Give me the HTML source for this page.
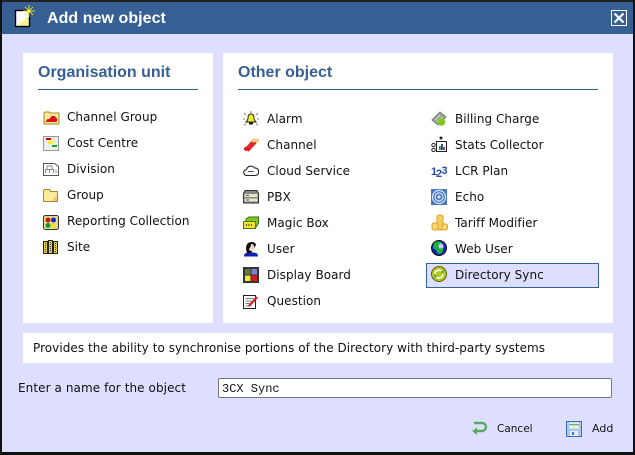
<!DOCTYPE html>
<html><head><meta charset="utf-8">
<style>
html,body{margin:0;padding:0}
body{width:635px;height:455px;position:relative;overflow:hidden;background:#dedfff;font-family:"DejaVu Sans","Liberation Sans",sans-serif;font-size:12px;color:#111;letter-spacing:.05px}
.a{position:absolute}
.t{position:absolute;white-space:nowrap;line-height:16px;height:16px}
.p{position:absolute;background:#fff}
.h{position:absolute;font:bold 16px/20px "Liberation Sans",sans-serif;color:#365f94;white-space:nowrap;letter-spacing:0}
.l{position:absolute;height:1px;background:#365f94}
svg{position:absolute;display:block}
</style></head><body>
<div class="a" style="left:0;top:0;width:635px;height:34px;background:#365f94"></div>
<div class="a" style="left:0;top:0;width:635px;height:2px;background:#222"></div>
<div class="a" style="left:0;top:0;width:2px;height:455px;background:#111"></div>
<div class="a" style="left:633px;top:0;width:2px;height:455px;background:#111"></div>
<div class="a" style="left:0;top:452px;width:635px;height:3px;background:#111"></div>

<svg style="left:14px;top:4px" width="24" height="24" viewBox="0 0 24 24"><rect x="1.500" y="6.500" width="14" height="16" fill="#fff" stroke="#000" stroke-width="1.400"/><path d="M3 21.500L14.500 21.500L14.500 12Z" fill="#fdf58c"/><path d="M11 3L19 11M19 3L11 11M15 1V13M9 7H21" stroke="#fff22a" stroke-width=".8"/><circle cx="15" cy="7" r="1.800" fill="#fff22a"/></svg>
<div class="t" style="left:47px;top:9px;font:bold 16px/20px 'Liberation Sans',sans-serif;color:#fff;height:20px;letter-spacing:.05px">Add new object</div>
<svg style="left:611px;top:10px" width="16" height="16" viewBox="0 0 16 16"><rect x=".5" y=".5" width="15" height="15" fill="none" stroke="#fff"/><path d="M3.500 3.500L12.500 12.500M12.500 3.500L3.500 12.500" stroke="#fff" stroke-width="2.200"/></svg>

<div class="p" style="left:23px;top:53px;width:190px;height:270px"></div>
<div class="p" style="left:223px;top:53px;width:390px;height:270px"></div>
<div class="p" style="left:23px;top:333px;width:590px;height:30px"></div>
<div class="h" style="left:38px;top:63px">Organisation unit</div>
<div class="l" style="left:38px;top:89px;width:160px"></div>
<div class="h" style="left:238px;top:63px">Other object</div>
<div class="l" style="left:238px;top:89px;width:360px"></div>

<!-- left icons -->
<svg style="left:43px;top:110px" width="17" height="15" viewBox="0 0 17 15"><path d="M1 3l1-1h4l1 1h9v11H1z" fill="#fbe89a" stroke="#a08a20"/><path d="M2.500 12l2-3 2 0 2-3 3 0 3 3-1 3z" fill="#d8141a"/></svg>
<svg style="left:43px;top:136px" width="16" height="15" viewBox="0 0 16 15"><rect x=".5" y=".5" width="15" height="14" fill="#eee" stroke="#999"/><rect x="3" y="2" width="5" height="2" fill="#b01010"/><rect x="5" y="5" width="5" height="3" fill="#ffee30"/><rect x="9" y="9" width="5" height="2" fill="#12a820"/></svg>
<svg style="left:43px;top:162px" width="16" height="15" viewBox="0 0 16 15"><path d="M.5 1.500h11l4 3v9H.500z" fill="#fff" stroke="#555"/><path d="M4 7V4h5v3M2.500 11V7.500h8V11M6.500 7.500V11M13 7.500V11" fill="none" stroke="#888"/></svg>
<svg style="left:43px;top:188px" width="16" height="15" viewBox="0 0 16 15"><path d="M.5 2.500l1-1h5l1 2h7v10H.500z" fill="#fdeca0" stroke="#a08a30"/><path d="M8 13l6-6v6z" fill="#f5c880"/></svg>
<svg style="left:43px;top:214px" width="16" height="16" viewBox="0 0 16 16"><rect x=".5" y="1.500" width="15" height="14" rx="2" fill="#e8d890" stroke="#333"/><circle cx="5" cy="6" r="2.500" fill="#d01010"/><circle cx="10.500" cy="6" r="2.500" fill="#1828c8"/><circle cx="5" cy="11.500" r="2.500" fill="#10a020"/><circle cx="10.500" cy="11.500" r="2.500" fill="#f0e020"/></svg>
<svg style="left:43px;top:240px" width="15" height="14" viewBox="0 0 15 14"><rect x=".5" y="1.500" width="4" height="12" fill="#e0d040" stroke="#222"/><rect x="5.500" y=".5" width="4" height="13" fill="#e0d040" stroke="#222"/><rect x="10.500" y="1.500" width="4" height="12" fill="#e0d040" stroke="#222"/><path d="M2.500 3v9M7.500 2v10M12.500 3v9" stroke="#444" stroke-dasharray="1 1"/></svg>

<div class="t" style="left:67px;top:109px">Channel Group</div>
<div class="t" style="left:67px;top:135px">Cost Centre</div>
<div class="t" style="left:67px;top:161px">Division</div>
<div class="t" style="left:67px;top:187px">Group</div>
<div class="t" style="left:67px;top:213px">Reporting Collection</div>
<div class="t" style="left:67px;top:239px">Site</div>

<!-- middle icons -->
<svg style="left:243px;top:111px" width="16" height="16" viewBox="0 0 16 16"><path d="M8 3c-2.500 0-3 2-3 4 0 2-1 3-2 4h10c-1-1-2-2-2-4 0-2-.500-4-3-4z" fill="#f4f020" stroke="#222"/><rect x="6" y="11.500" width="4" height="2" fill="#222"/><path d="M8 0v2M1 2l2 2M15 2l-2 2M0 8h2M14 8h2M1 14l2-1M15 14l-2-1" stroke="#888"/></svg>
<svg style="left:243px;top:137px" width="16" height="15" viewBox="0 0 16 15"><path d="M2 13.500L9.500 5M4.500 13.500L12.500 5" stroke="#e02828" stroke-width="3.200"/><path d="M1 12l2-2M4 13l2-1" stroke="#a01010"/><circle cx="10.500" cy="3.500" r="2" fill="#f6c880"/><circle cx="14" cy="3.500" r="2" fill="#f6c880"/></svg>
<svg style="left:243px;top:165px" width="16" height="11" viewBox="0 0 16 11"><path d="M4 10.500a3 3 0 0 1-.5-6 4.500 4.500 0 0 1 8-1.500 3.500 3.500 0 0 1 1 7.500z" fill="#fff" stroke="#222" stroke-width="1.100"/><rect x="5" y="6" width="6" height="1" fill="#4050a0"/></svg>
<svg style="left:243px;top:190px" width="16" height="14" viewBox="0 0 16 14"><path d="M2 .5h12l1.500 3v9.500H.5V3.500z" fill="#888" stroke="#333"/><rect x="1.500" y="4" width="13" height="3" fill="#e8e4c8"/><rect x="1.500" y="8.500" width="13" height="3" fill="#e8e4c8"/><path d="M3 5.500h3M3 10h3" stroke="#555"/></svg>
<svg style="left:243px;top:216px" width="16" height="14" viewBox="0 0 16 14"><path d="M3 3L6 1h9.500v6L13 11H3z" fill="#7cc820" stroke="#3a6a10"/><rect x=".5" y="5.500" width="12" height="7" fill="#f4e030" stroke="#4a7a10"/><path d="M3 9h1M5.500 9h1M8 9h1" stroke="#222" stroke-width="1.500"/></svg>
<svg style="left:243px;top:241px" width="16" height="16" viewBox="0 0 16 16"><path d="M1 15.500c0-3.500 2-4 7-4s7 .500 7 4z" fill="#1020b0"/><path d="M3 8c0-5 2-7 6-7 3 0 4 2 4 3l-5 8H4z" fill="#111"/><path d="M8 3c3 0 3.500 2 3 4s-1.500 3-3 3c-1 0-2-1-2-2 1-1 2-3 2-5z" fill="#f5d8b8"/></svg>
<svg style="left:243px;top:267px" width="16" height="16" viewBox="0 0 16 16"><rect width="16" height="16" fill="#333"/><rect x="2" y="2" width="5.500" height="5.500" fill="#6a7a3a"/><rect x="8.500" y="2" width="5.500" height="5.500" fill="#8080d8"/><rect x="2" y="8.500" width="5.500" height="5.500" fill="#f4e830"/><rect x="8.500" y="8.500" width="5.500" height="5.500" fill="#e01818"/></svg>
<svg style="left:243px;top:294px" width="16" height="15" viewBox="0 0 16 15"><path d="M.5 1.500h12v13H.5z" fill="#fff" stroke="#222"/><path d="M2.500 4.500h8M2.500 7h6M2.500 9.500h5M2.500 12h4" stroke="#777"/><path d="M6 12l8-9" stroke="#e01818" stroke-width="2.200"/></svg>

<div class="t" style="left:267px;top:111px">Alarm</div>
<div class="t" style="left:267px;top:137px">Channel</div>
<div class="t" style="left:267px;top:163px">Cloud Service</div>
<div class="t" style="left:267px;top:189px">PBX</div>
<div class="t" style="left:267px;top:215px">Magic Box</div>
<div class="t" style="left:267px;top:241px">User</div>
<div class="t" style="left:267px;top:267px">Display Board</div>
<div class="t" style="left:267px;top:293px">Question</div>

<!-- selected -->
<div class="a" style="left:426px;top:263px;width:171px;height:23px;background:#dedfff;border:1px solid #365f94"></div>

<!-- right icons -->
<svg style="left:431px;top:111px" width="16" height="16" viewBox="0 0 16 16"><path d="M1 9L9 1l6 5-8 8z" fill="#9aa88a" stroke="#778"/><path d="M4 9l5-5M6 11l5-5" stroke="#d8e0c8"/><circle cx="10.500" cy="11" r="3.800" fill="#80c820"/></svg>
<svg style="left:431px;top:136px" width="16" height="16" viewBox="0 0 16 16"><rect x="5.500" y="5.500" width="10" height="10" fill="#fff" stroke="#222"/><rect x="8" y="10" width="1.800" height="4" fill="#18a020"/><rect x="10" y="8" width="1.800" height="6" fill="#2030d0"/><rect x="12" y="11" width="1.800" height="3" fill="#d01818"/><circle cx="2.500" cy="9" r="1.700" fill="none" stroke="#222"/><circle cx="2.500" cy="14" r="1.700" fill="none" stroke="#222"/><circle cx="10" cy="2" r="1.500" fill="#222"/></svg>
<svg style="left:431px;top:162px" width="16" height="16" viewBox="0 0 16 16"><text x="0" y="13" font-family="Liberation Sans" font-size="11" font-weight="bold" fill="#2a4ab0">1</text><text x="5" y="15" font-family="Liberation Sans" font-size="11" font-weight="bold" fill="#2a4ab0">2</text><text x="10.500" y="12" font-family="Liberation Sans" font-size="11" font-weight="bold" fill="#2a4ab0">3</text></svg>
<svg style="left:431px;top:189px" width="16" height="16" viewBox="0 0 16 16"><rect width="16" height="16" fill="#4a78c0"/><circle cx="8" cy="8" r="6.500" fill="none" stroke="#d8e4f8" stroke-width="1.200"/><circle cx="8" cy="8" r="4" fill="none" stroke="#d8e4f8" stroke-width="1.200"/><circle cx="8" cy="8" r="1.600" fill="#d8e4f8"/></svg>
<svg style="left:431px;top:214px" width="17" height="17" viewBox="0 0 17 17"><rect x="6" y="1" width="6" height="15" rx="2" fill="#f4cf60" stroke="#d8a030"/><rect x="1" y="9" width="6" height="7" rx="2" fill="#f8d870" stroke="#d8a030"/><rect x="11" y="10" width="5.500" height="6" rx="2" fill="#f8d870" stroke="#d8a030"/></svg>
<svg style="left:431px;top:240px" width="16" height="16" viewBox="0 0 16 16"><circle cx="8" cy="8" r="7.500" fill="#1020b8" stroke="#111"/><path d="M3 3c2-2 5-2 7-1l3 5-2 6-4 1-2-4-3-2z" fill="#20b040"/><circle cx="10" cy="6" r="2.500" fill="#c8c8f0"/></svg>
<svg style="left:431px;top:266px" width="16" height="16" viewBox="0 0 16 16"><circle cx="8" cy="8" r="7.500" fill="#b8c828" stroke="#566010"/><path d="M4 8a4 4 0 0 1 7-2.500M12 8a4 4 0 0 1-7 2.500" fill="none" stroke="#fff" stroke-width="1.500"/><path d="M9.500 6.500h3v-3zM6.500 9.500h-3v3z" fill="#18a030"/></svg>

<div class="t" style="left:455px;top:111px">Billing Charge</div>
<div class="t" style="left:455px;top:137px">Stats Collector</div>
<div class="t" style="left:455px;top:163px">LCR Plan</div>
<div class="t" style="left:455px;top:189px">Echo</div>
<div class="t" style="left:455px;top:215px">Tariff Modifier</div>
<div class="t" style="left:455px;top:241px">Web User</div>
<div class="t" style="left:455px;top:267px">Directory Sync</div>

<div class="t" style="left:33px;top:340px">Provides the ability to synchronise portions of the Directory with third-party systems</div>
<div class="t" style="left:18px;top:380px;letter-spacing:.08px">Enter a name for the object</div>
<div class="a" style="left:218px;top:378px;width:392px;height:18px;background:#fff;border:1px solid #777;border-radius:2px"></div>
<div class="t" style="left:222px;top:381px;font:12px/16px 'Liberation Mono',monospace;letter-spacing:0">3CX Sync</div>

<svg style="left:471px;top:420px" width="16" height="16" viewBox="0 0 16 16"><path d="M3 3h8a3.500 3.500 0 0 1 0 8H4" fill="none" stroke="#5aa860" stroke-width="2.400"/><path d="M6 7.500L1 11l5 4z" fill="#5aa860"/></svg>
<div class="t" style="left:497px;top:421px;font-size:10.500px;letter-spacing:0">Cancel</div>
<svg style="left:566px;top:421px" width="16" height="16" viewBox="0 0 16 16"><rect x=".5" y=".5" width="15" height="15" fill="#a8c8f0" stroke="#3a70b8"/><rect x="3" y="1.500" width="10" height="6" fill="#e8f0e8"/><rect x="3" y="3" width="10" height="1.300" fill="#70b060"/><rect x="4" y="10" width="8" height="5" fill="#e8eef8"/><rect x="6" y="11" width="2" height="3" fill="#3a70b8"/></svg>
<div class="t" style="left:592px;top:421px;font-size:11px;letter-spacing:0">Add</div>
</body></html>
